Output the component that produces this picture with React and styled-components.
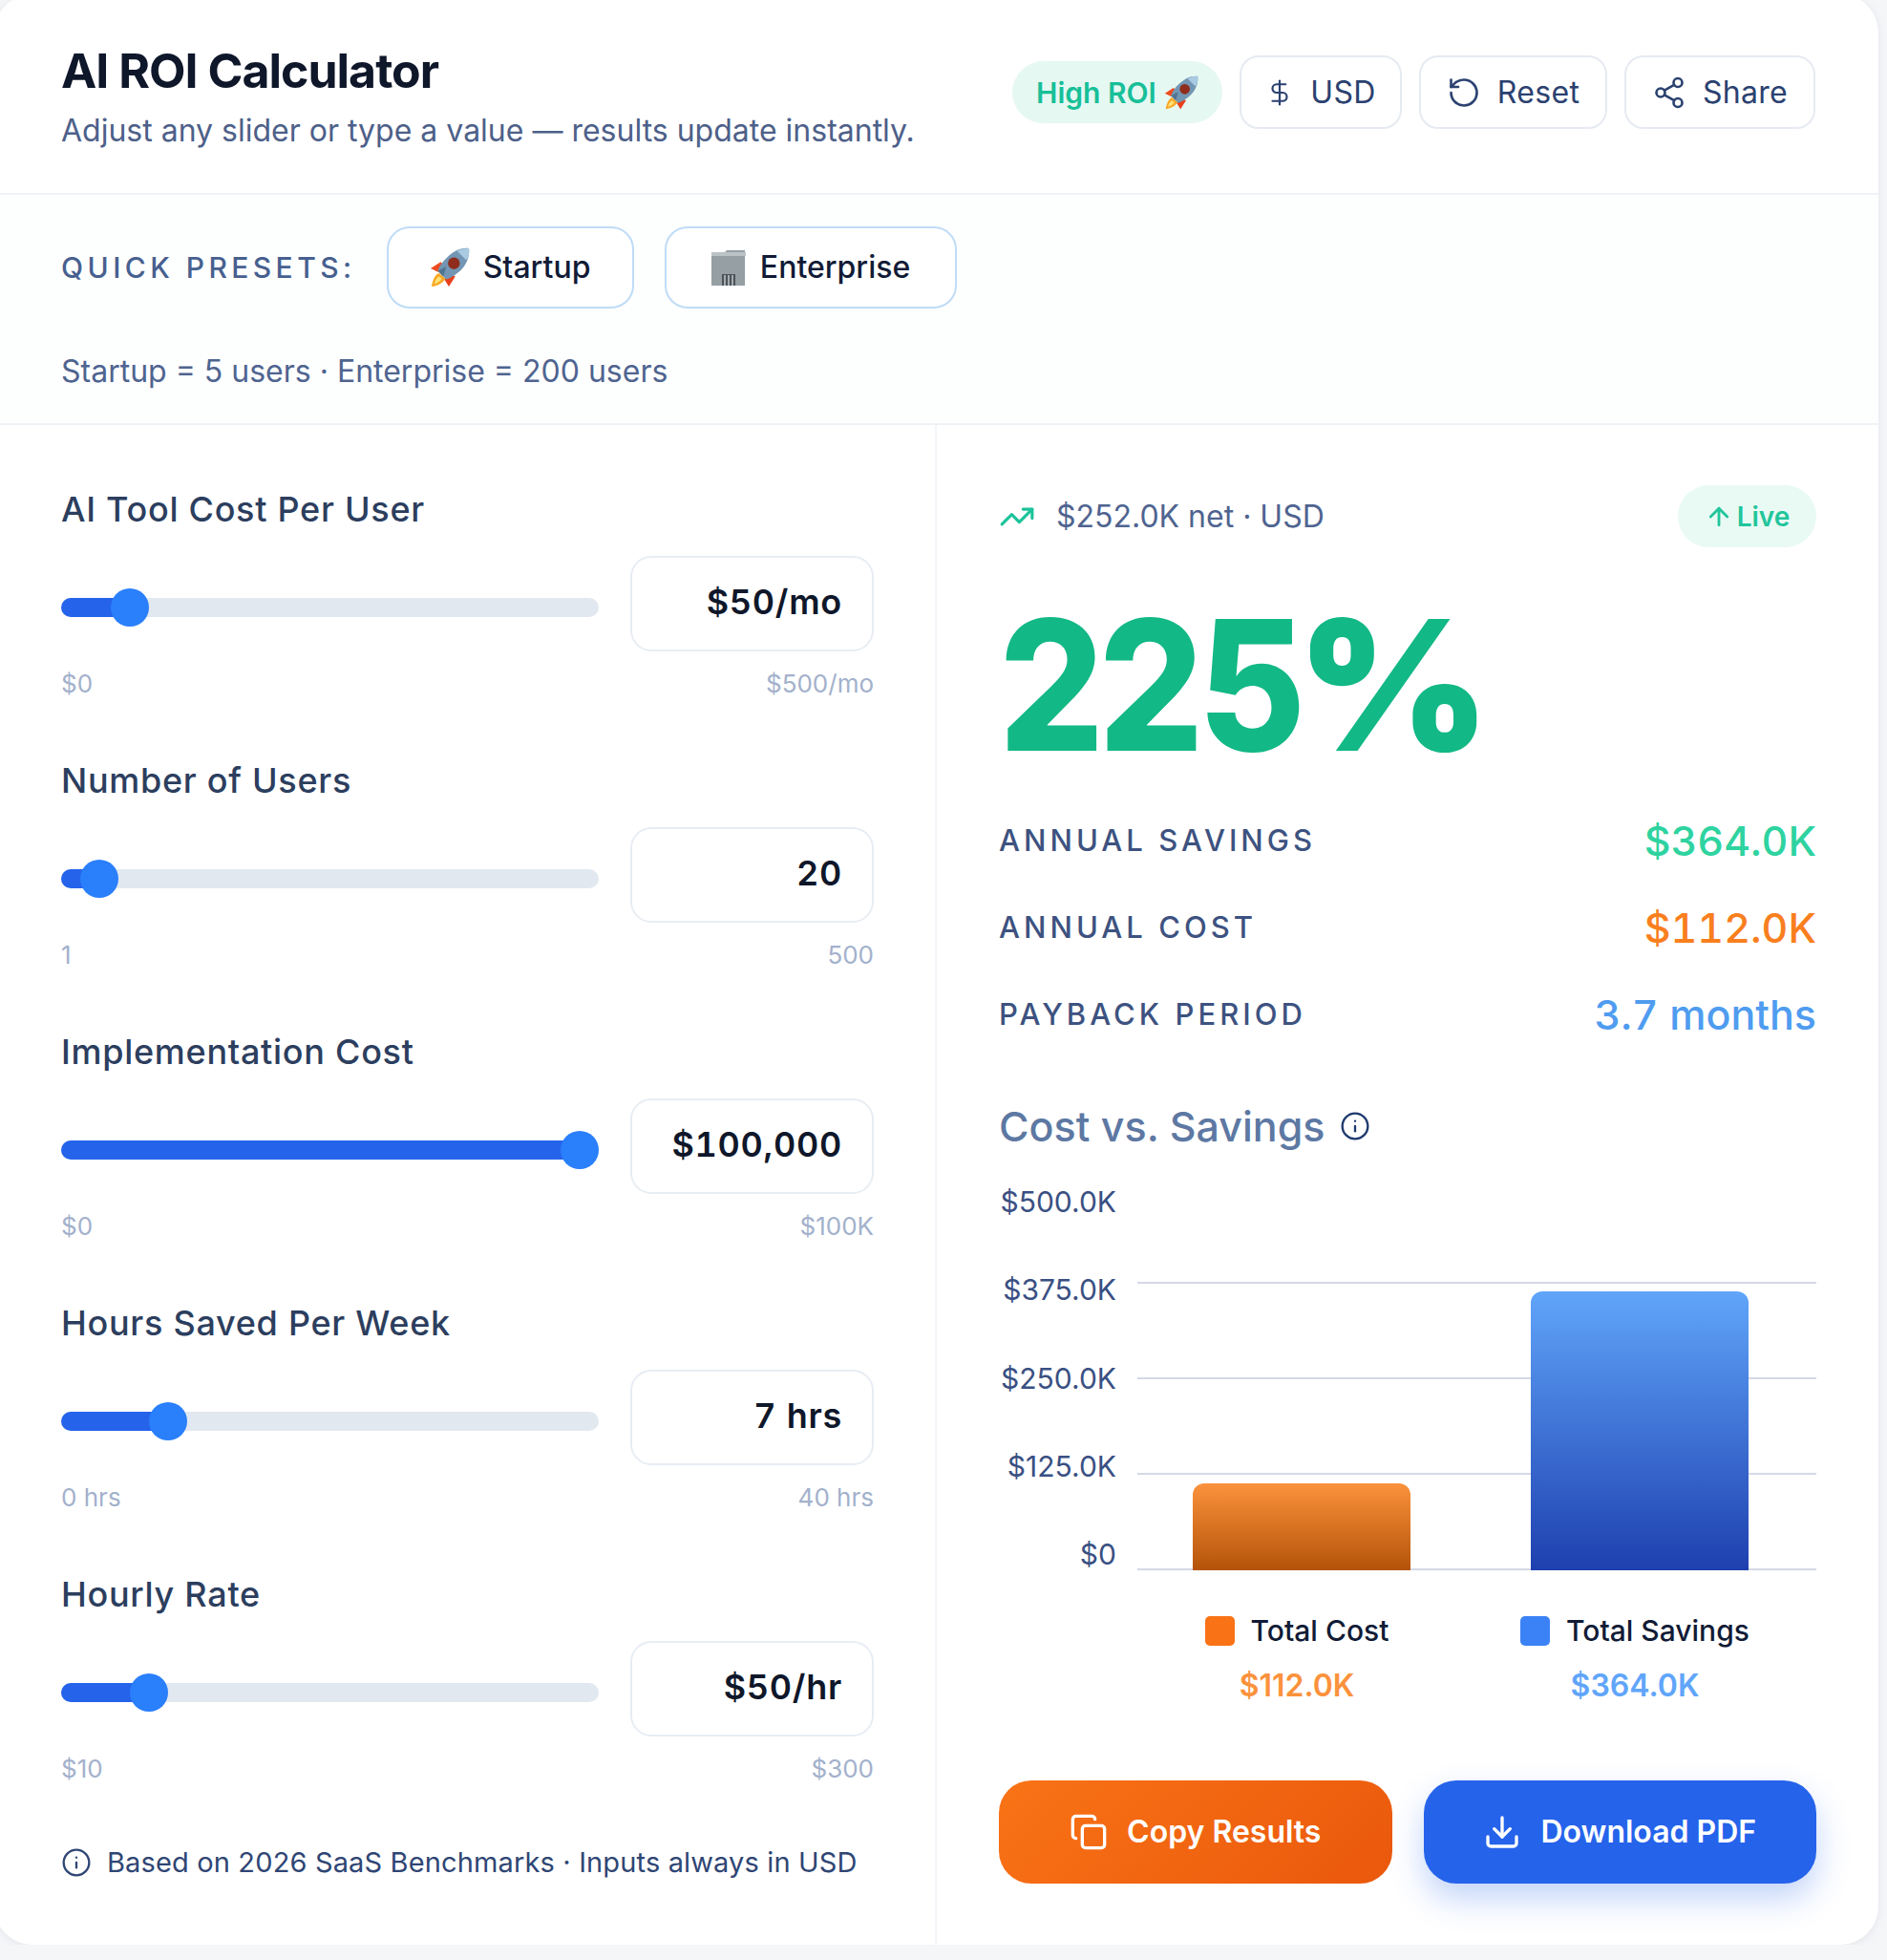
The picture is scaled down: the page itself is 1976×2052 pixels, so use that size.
import styled, { createGlobalStyle } from "styled-components";
import {
  ArrowUp,
  Copy,
  DollarSign,
  Download,
  Info,
  RotateCcw,
  Share2,
  TrendingUp,
} from "lucide-react";

const GlobalStyle = createGlobalStyle`
  html, body {
    margin: 0;
    background: #f5f6f8;
    font-family: Inter, "Liberation Sans", sans-serif;
    overflow: hidden;
  }
  * { box-sizing: border-box; }
`;

const Card = styled.div`
  width: 1973px;
  height: 2042px;
  margin: -6px 0 0 -6px;
  display: flex;
  flex-direction: column;
  background: #fff;
  border-radius: 40px;
  box-shadow: 0 2px 10px rgba(148, 163, 184, 0.18);
  overflow: hidden;
`;

const Header = styled.header`
  height: 210px;
  display: flex;
  justify-content: space-between;
  align-items: flex-start;
  padding: 52px 66px 0 70px;
  border-bottom: 2px solid #eef2f7;
`;

const Title = styled.h1`
  margin: 0;
  font-size: 50px;
  line-height: 56px;
  font-weight: 700;
  letter-spacing: -0.02em;
  color: #0f172a;
`;

const Subtitle = styled.p`
  margin: 13px 0 0;
  font-size: 32px;
  line-height: 44px;
  color: #4d6089;
`;

const Actions = styled.div`
  display: flex;
  align-items: center;
  gap: 18px;
  margin-top: 12px;
`;

const RoiBadge = styled.span`
  height: 65px;
  width: 220px;
  display: flex;
  align-items: center;
  justify-content: center;
  gap: 8px;
  border-radius: 33px;
  background: #e6f8f2;
  color: #18bf98;
  font-size: 30px;
  font-weight: 600;
`;

const HeaderButton = styled.button`
  height: 77px;
  width: ${(p) => p.$width}px;
  display: flex;
  align-items: center;
  justify-content: center;
  gap: 17px;
  background: #fff;
  border: 2px solid #e6eaf1;
  border-radius: 20px;
  color: #2b4170;
  font-family: inherit;
  font-size: 32px;
  letter-spacing: 0.01em;
`;

const Presets = styled.section`
  height: 241px;
  padding: 33px 66px 0 70px;
  background: #fdfefe;
  border-bottom: 2px solid #eef2f7;
`;

const PresetRow = styled.div`
  display: flex;
  align-items: center;
  gap: 32px;
`;

const PresetLabel = styled.span`
  font-size: 30px;
  font-weight: 500;
  letter-spacing: 0.148em;
  color: #47608f;
`;

const PresetButton = styled.button`
  height: 86px;
  width: ${(p) => p.$width}px;
  display: flex;
  align-items: center;
  justify-content: center;
  gap: 14px;
  padding-bottom: 2px;
  background: #fff;
  border: 2px solid #bfdcf7;
  border-radius: 24px;
  color: #111b36;
  font-family: inherit;
  font-size: 32px;
  font-weight: 500;
`;

const PresetNote = styled.p`
  margin: 44px 0 0;
  font-size: 32px;
  line-height: 44px;
  color: #4f6490;
`;

const Body = styled.div`
  flex: 1;
  display: grid;
  grid-template-columns: 987px 1fr;
`;

const Inputs = styled.section`
  padding: 63px 64px 0 70px;
  border-right: 2px solid #f3f5f9;
`;

const Field = styled.div`
  height: 226px;
  margin-bottom: 58px;
`;

const FieldLabel = styled.div`
  font-size: 36px;
  line-height: 50px;
  font-weight: 500;
  letter-spacing: 0.02em;
  color: #2c3e5e;
`;

const FieldRow = styled.div`
  display: flex;
  align-items: center;
  gap: 33px;
  margin-top: 24px;
`;

const Track = styled.div`
  position: relative;
  flex: 1;
  height: 20px;
  margin-top: 8px;
  border-radius: 10px;
  background: #e2e8f0;
`;

const TrackFill = styled.div`
  position: absolute;
  left: 0;
  top: 0;
  bottom: 0;
  border-radius: 10px;
  background: #2563eb;
`;

const Thumb = styled.div`
  position: absolute;
  top: -10px;
  width: 40px;
  height: 40px;
  border-radius: 50%;
  background: #2a7ffb;
`;

const ValueBox = styled.div`
  width: 255px;
  height: 100px;
  display: flex;
  align-items: center;
  justify-content: flex-end;
  padding: 0 31px 4px 0;
  background: #fff;
  border: 2px solid #e8edf4;
  border-radius: 22px;
  font-size: 36px;
  font-weight: 600;
  letter-spacing: 0.02em;
  font-variant-numeric: tabular-nums;
  color: #0f172a;
`;

const RangeLabels = styled.div`
  display: flex;
  justify-content: space-between;
  margin-top: 15px;
  font-size: 26px;
  line-height: 38px;
  color: #a3b1cc;
`;

const Footnote = styled.div`
  display: flex;
  align-items: center;
  gap: 16px;
  margin-top: 60px;
  font-size: 29px;
  line-height: 40px;
  letter-spacing: 0.005em;
  white-space: nowrap;
  color: #2f4674;
`;

const Results = styled.section`
  padding: 63px 65px 0 65px;
`;

const ResultsTop = styled.div`
  display: flex;
  align-items: center;
  justify-content: space-between;
  height: 65px;
`;

const NetInfo = styled.div`
  display: flex;
  align-items: center;
  gap: 22px;
  font-size: 32px;
  color: #4f6490;
`;

const LivePill = styled.span`
  width: 145px;
  height: 65px;
  display: flex;
  align-items: center;
  justify-content: center;
  gap: 4px;
  border-radius: 33px;
  background: #e9faf4;
  color: #22c59b;
  font-size: 28px;
  font-weight: 600;
`;

const RoiValue = styled.div`
  display: flex;
  margin-top: 44px;
  font-size: 190px;
  line-height: 200px;
  font-weight: 800;
  letter-spacing: -0.035em;
  color: #12b886;
`;

const RoiDigits = styled.span`
  margin-right: -34px;
  transform: scaleX(0.91);
  transform-origin: left center;
`;

const RoiPercent = styled.span`
  font-weight: 900;
  transform: scaleX(1.02);
  transform-origin: left center;
`;

const Stats = styled.div`
  margin-top: 17px;
`;

const StatRow = styled.div`
  height: 91px;
  display: flex;
  align-items: center;
  justify-content: space-between;
`;

const StatLabel = styled.span`
  font-size: 31px;
  font-weight: 500;
  letter-spacing: 0.13em;
  color: #3d5280;
`;

const StatValue = styled.span`
  font-size: 43px;
  font-weight: 500;
  font-variant-numeric: tabular-nums;
  color: ${(p) => p.$color};
`;

const ChartTitle = styled.h2`
  display: flex;
  align-items: center;
  gap: 16px;
  margin: 44px 0 0;
  font-size: 43px;
  line-height: 56px;
  font-weight: 500;
  color: #5d78a3;
`;

const Chart = styled.div`
  display: flex;
  gap: 22px;
  margin-top: 33px;
`;

const YAxis = styled.div`
  width: 123px;
  height: 405px;
  display: flex;
  flex-direction: column;
  justify-content: space-between;
  align-items: flex-end;
  font-size: 30px;
  line-height: 36px;
  color: #3a5083;
`;

const Legend = styled.div`
  display: grid;
  grid-template-columns: 1fr 1fr;
  padding: 44px 13px 0 135px;
`;

const LegendItem = styled.div`
  display: flex;
  flex-direction: column;
  align-items: center;
`;

const LegendName = styled.div`
  display: flex;
  align-items: center;
  gap: 17px;
  font-size: 30px;
  line-height: 36px;
  font-weight: 500;
  color: #111b36;
`;

const Swatch = styled.span`
  width: 31px;
  height: 31px;
  border-radius: 5px;
  background: ${(p) => p.$color};
`;

const LegendValue = styled.div`
  margin-top: 20px;
  font-size: 32px;
  line-height: 40px;
  font-weight: 600;
  color: ${(p) => p.$color};
`;

const Buttons = styled.div`
  display: grid;
  grid-template-columns: 1fr 1fr;
  gap: 33px;
  margin-top: 79px;
`;

const ActionButton = styled.button`
  height: 108px;
  display: flex;
  align-items: center;
  justify-content: center;
  gap: 20px;
  padding-bottom: 2px;
  border: none;
  border-radius: 34px;
  color: #fff;
  font-family: inherit;
  font-size: 32px;
  font-weight: 600;
  background: ${(p) =>
    p.$primary ? "#2563eb" : "linear-gradient(135deg, #f97316, #ea580c)"};
  box-shadow: ${(p) =>
    p.$primary ? "0 16px 34px rgba(37, 99, 235, 0.28)" : "none"};
`;

const fields = [
  { label: "AI Tool Cost Per User", display: "$50/mo", value: 50, min: 0, max: 500, low: "$0", high: "$500/mo" },
  { label: "Number of Users", display: "20", value: 20, min: 1, max: 500, low: "1", high: "500" },
  { label: "Implementation Cost", display: "$100,000", value: 100, min: 0, max: 100, low: "$0", high: "$100K" },
  { label: "Hours Saved Per Week", display: "7 hrs", value: 7, min: 0, max: 40, low: "0 hrs", high: "40 hrs" },
  { label: "Hourly Rate", display: "$50/hr", value: 50, min: 10, max: 300, low: "$10", high: "$300" },
];

const Rocket = ({ size }) => (
  <svg width={size} height={size} viewBox="0 0 44 44">
    <path d="M12 16 1 23l8 4 7-7z" fill="#ee4b1f" />
    <path d="M28 32l-7 11-5-8 6-7z" fill="#e8401c" />
    <path d="M10 28c-4 2-7 8-8 15 7-1 13-4 15-9z" fill="#f9a825" />
    <path d="M10 32c-2 1-4 4-5 8 4-1 7-3 8-6z" fill="#ffe27a" />
    <path
      d="M43 1c1 10-3 19-11 26-4 3-9 7-14 8l-9-9c1-5 5-10 9-14C26 4 34 0 43 1z"
      fill="#7296b3"
    />
    <path d="M43 1c-5 0-9 1-13 3l10 10c3-4 4-9 3-13z" fill="#a9cbe2" />
    <circle cx="26.5" cy="17.5" r="6.5" fill="#8f2c1d" />
    <path d="M15 32l-6-6 9-5z" fill="#50738f" />
  </svg>
);

const Building = ({ size }) => (
  <svg width={size} height={size} viewBox="0 0 38 38">
    <path d="M3 3h12l2-2h19v37H1V4z" fill="#959fa4" />
    <rect x="1" y="3" width="36" height="4" fill="#bcc3c7" />
    <rect x="12" y="26" width="14" height="12" fill="#4b5358" />
    <path d="M15 27v11M19 27v11M23 27v11" stroke="#c3c9cc" strokeWidth="1.5" />
  </svg>
);

const BarChart = () => (
  <svg width="711" height="405" viewBox="0 0 711 405">
    <defs>
      <linearGradient id="costBar" x1="0" y1="0" x2="0" y2="1">
        <stop offset="0" stopColor="#fb923c" />
        <stop offset="1" stopColor="#b45309" />
      </linearGradient>
      <linearGradient id="savingsBar" x1="0" y1="0" x2="0" y2="1">
        <stop offset="0" stopColor="#60a5fa" />
        <stop offset="1" stopColor="#1e40af" />
      </linearGradient>
    </defs>
    {[103, 203, 303, 403].map((y) => (
      <line key={y} x1="0" x2="711" y1={y} y2={y} stroke="#d5d9e5" strokeWidth="2" />
    ))}
    <path d="M58 404V325a12 12 0 0 1 12-12h204a12 12 0 0 1 12 12v79z" fill="url(#costBar)" />
    <path d="M412 404V124a12 12 0 0 1 12-12h204a12 12 0 0 1 12 12v280z" fill="url(#savingsBar)" />
  </svg>
);

const App = () => {
  return (
    <>
      <GlobalStyle />
      <Card>
        <Header>
          <div>
            <Title>AI ROI Calculator</Title>
            <Subtitle>Adjust any slider or type a value — results update instantly.</Subtitle>
          </div>
          <Actions>
            <RoiBadge>
              High ROI <Rocket size={36} />
            </RoiBadge>
            <HeaderButton $width={170}>
              <DollarSign size={30} strokeWidth={1.75} /> USD
            </HeaderButton>
            <HeaderButton $width={197}>
              <RotateCcw size={36} strokeWidth={1.75} /> Reset
            </HeaderButton>
            <HeaderButton $width={200}>
              <Share2 size={36} strokeWidth={1.75} /> Share
            </HeaderButton>
          </Actions>
        </Header>

        <Presets>
          <PresetRow>
            <PresetLabel>QUICK PRESETS:</PresetLabel>
            <PresetButton $width={259}>
              <Rocket size={42} /> Startup
            </PresetButton>
            <PresetButton $width={306}>
              <Building size={38} /> Enterprise
            </PresetButton>
          </PresetRow>
          <PresetNote>Startup = 5 users · Enterprise = 200 users</PresetNote>
        </Presets>

        <Body>
          <Inputs>
            {fields.map((f) => {
              const ratio = (f.value - f.min) / (f.max - f.min);
              const thumbLeft = `calc(${ratio} * (100% - 40px))`;
              return (
                <Field key={f.label}>
                  <FieldLabel>{f.label}</FieldLabel>
                  <FieldRow>
                    <Track>
                      <TrackFill style={{ width: `calc(${thumbLeft} + 20px)` }} />
                      <Thumb style={{ left: thumbLeft }} />
                    </Track>
                    <ValueBox>{f.display}</ValueBox>
                  </FieldRow>
                  <RangeLabels>
                    <span>{f.low}</span>
                    <span>{f.high}</span>
                  </RangeLabels>
                </Field>
              );
            })}
            <Footnote>
              <Info size={32} strokeWidth={1.75} />
              Based on 2026 SaaS Benchmarks · Inputs always in USD
            </Footnote>
          </Inputs>

          <Results>
            <ResultsTop>
              <NetInfo>
                <TrendingUp size={38} strokeWidth={2} color="#1cc39a" />
                $252.0K net · USD
              </NetInfo>
              <LivePill>
                <ArrowUp size={30} strokeWidth={2.25} /> Live
              </LivePill>
            </ResultsTop>
            <RoiValue>
              <RoiDigits>225</RoiDigits>
              <RoiPercent>%</RoiPercent>
            </RoiValue>
            <Stats>
              <StatRow>
                <StatLabel>ANNUAL SAVINGS</StatLabel>
                <StatValue $color="#2ed3a0">$364.0K</StatValue>
              </StatRow>
              <StatRow>
                <StatLabel>ANNUAL COST</StatLabel>
                <StatValue $color="#f97f1f">$112.0K</StatValue>
              </StatRow>
              <StatRow>
                <StatLabel>PAYBACK PERIOD</StatLabel>
                <StatValue $color="#4f9cf0">3.7 months</StatValue>
              </StatRow>
            </Stats>
            <ChartTitle>
              Cost vs. Savings
              <Info size={32} strokeWidth={1.75} color="#1e3a6e" />
            </ChartTitle>
            <Chart>
              <YAxis>
                <span>$500.0K</span>
                <span>$375.0K</span>
                <span>$250.0K</span>
                <span>$125.0K</span>
                <span>$0</span>
              </YAxis>
              <BarChart />
            </Chart>
            <Legend>
              <LegendItem>
                <LegendName>
                  <Swatch $color="#f97316" /> Total Cost
                </LegendName>
                <LegendValue $color="#fb923c">$112.0K</LegendValue>
              </LegendItem>
              <LegendItem>
                <LegendName>
                  <Swatch $color="#3b82f6" /> Total Savings
                </LegendName>
                <LegendValue $color="#60a5fa">$364.0K</LegendValue>
              </LegendItem>
            </Legend>
            <Buttons>
              <ActionButton>
                <Copy size={40} strokeWidth={2} /> Copy Results
              </ActionButton>
              <ActionButton $primary>
                <Download size={40} strokeWidth={2} /> Download PDF
              </ActionButton>
            </Buttons>
          </Results>
        </Body>
      </Card>
    </>
  );
};

export default App;
